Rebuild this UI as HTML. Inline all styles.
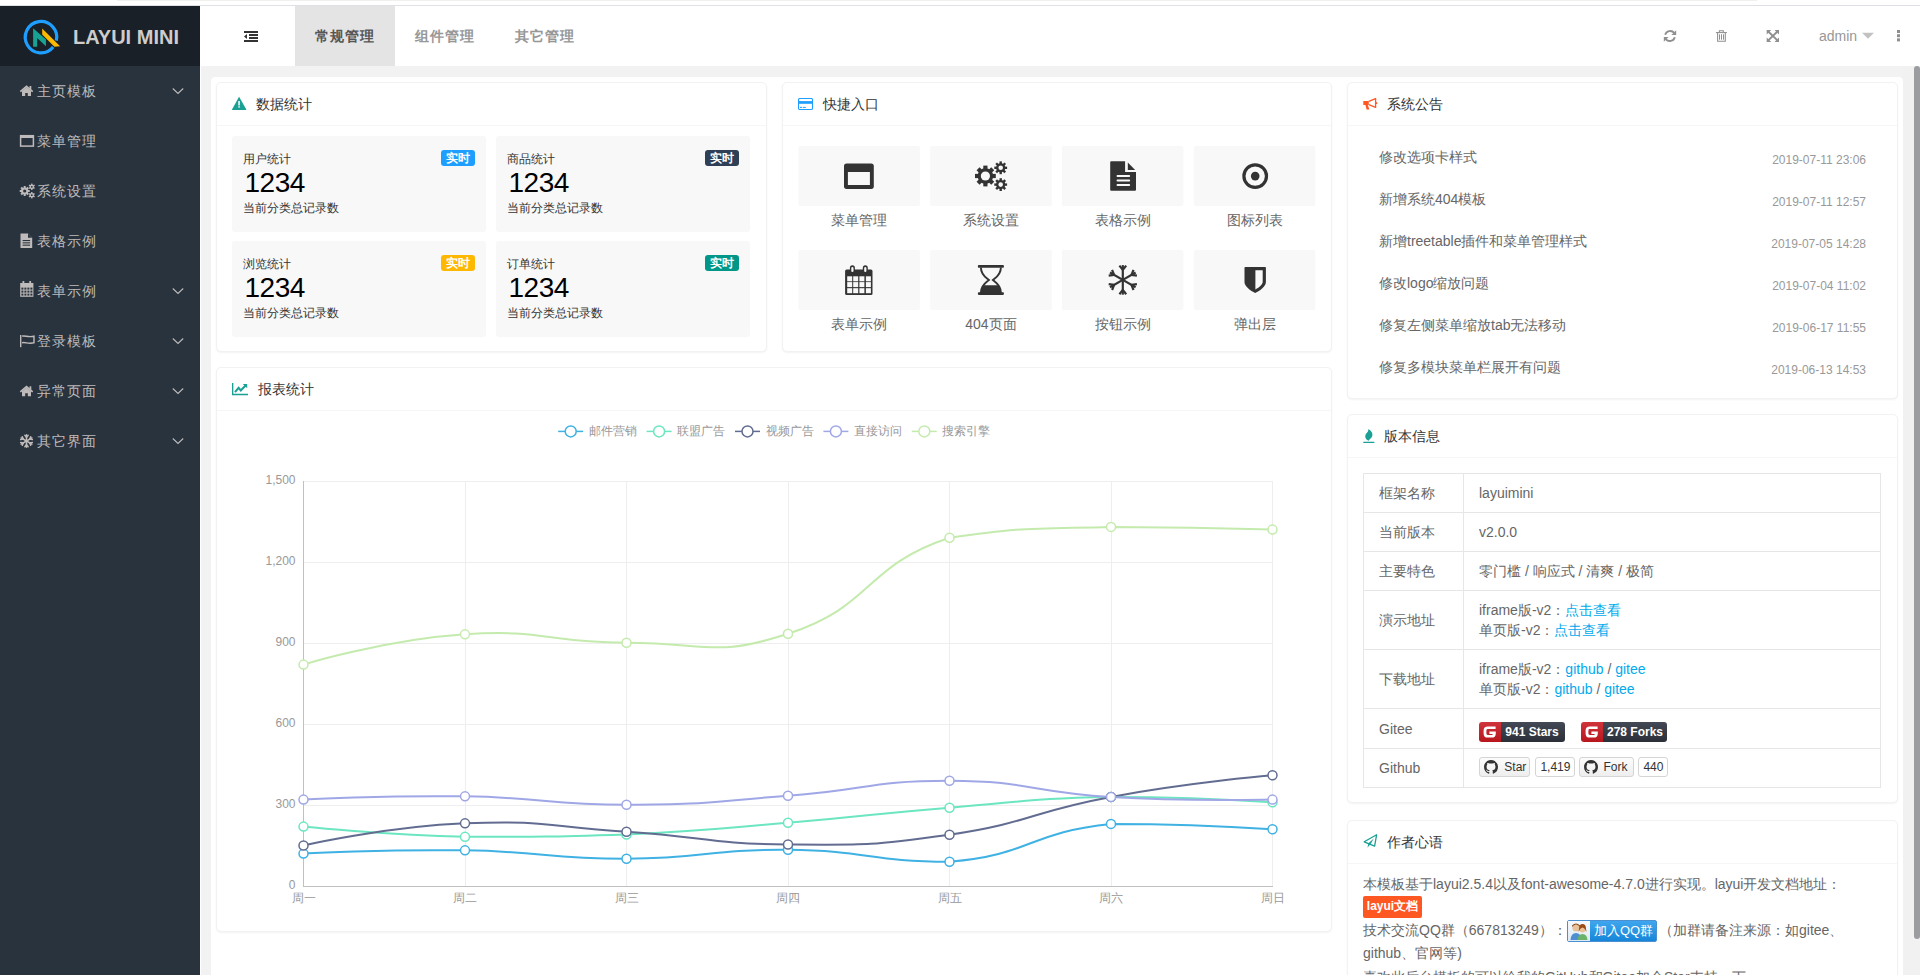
<!DOCTYPE html>
<html><head><meta charset="utf-8">
<style>
*{box-sizing:border-box;margin:0;padding:0}
html,body{width:1920px;height:975px;overflow:hidden;background:#fff;font-family:"Liberation Sans",sans-serif;font-size:14px;color:#666}
.abs{position:absolute}
#topline{position:absolute;left:0;top:5px;width:1920px;height:1px;background:#dfe0e6}
#logo{position:absolute;left:0;top:6px;width:200px;height:60px;background:#192027}
#logo .t{position:absolute;left:73px;top:19px;font-size:20px;font-weight:bold;color:#cfcccc;line-height:24px;letter-spacing:0}
#side{position:absolute;left:0;top:66px;width:200px;height:909px;background:#28333e}
#side .it{position:absolute;left:0;width:200px;height:50px;line-height:50px;color:#bfbbbb;font-size:14px}
#side .it svg{position:absolute;fill:#bfbbbb}
#side .it span{position:absolute;left:37px;top:0;letter-spacing:1px}
#side .it .chev{position:absolute;left:172px;top:22px}
#header{position:absolute;left:200px;top:6px;width:1720px;height:60px;background:#fff}
.tab{position:absolute;top:0;height:60px;line-height:60px;font-size:14px;font-weight:bold;color:#979797;letter-spacing:1px}
#frame{position:absolute;left:200px;top:66px;width:1720px;height:909px;background:#f2f2f2;border-left:1px solid #fff}
#main{position:absolute;left:210px;top:76px;width:1694px;height:1200px;background:#fff;border:1px solid #f2f2f2;border-radius:5px}
.card{position:absolute;background:#fff;border:1px solid #f2f2f2;border-radius:5px;box-shadow:0 1px 2px 0 rgba(0,0,0,.05)}
.ch{position:absolute;left:0;top:0;right:0;height:43px;border-bottom:1px solid #f6f6f6;color:#333;font-size:14px;line-height:42px;padding-left:39px}
.ch svg{position:absolute;left:15px}
#sb{position:absolute;left:1903px;top:66px;width:17px;height:909px;background:#f1f1f1}
#thumb{position:absolute;left:1914px;top:66px;width:6px;height:873px;background:#9c9da1;border-radius:3px}

.panel{position:absolute;width:254px;height:96px;background:#f8f8f8;border-radius:3px}
.panel .h5{position:absolute;left:11px;top:14.5px;font-size:12px;line-height:16px;color:#333}
.panel .lab{position:absolute;right:11px;top:14px;width:34px;height:16px;border-radius:3px;color:#fff;font-size:12px;font-weight:bold;line-height:16px;text-align:center}
.panel .num{position:absolute;left:12.5px;top:30.5px;font-size:28px;letter-spacing:-0.5px;line-height:32px;color:#000}
.panel .sm{position:absolute;left:11px;top:63.5px;font-size:12px;line-height:16px;color:#333}

.tb{position:absolute;border-collapse:collapse;font-size:14px;color:#666}
.tb td{border:1px solid #e6e6e6;padding:0 15px;line-height:20px;vertical-align:middle;white-space:nowrap}
a.lk{color:#01aaed;text-decoration:none}
.gb{position:absolute;height:19.5px;border-radius:3px;overflow:hidden;font-size:12px;font-weight:bold;color:#fff;line-height:21.5px}
.gb .r{position:absolute;left:0;top:0;width:22px;height:100%;background:linear-gradient(#d0343b,#b8161d)}
.gb .d{position:absolute;left:22px;top:0;right:0;height:100%;background:linear-gradient(#434955,#2b2f38);padding-left:4px}
.gh{position:absolute;height:19.5px;border:1px solid #d5d5d5;border-radius:3px;font-size:12px;font-weight:normal;color:#333;line-height:19.5px;background:linear-gradient(#fcfcfc,#eeeeee)}
.gc{position:absolute;height:19.5px;border:1px solid #d5d5d5;border-radius:3px;font-size:12px;color:#333;line-height:19.5px;background:#fff;text-align:center}
</style></head><body>
<div id="topline"></div><div class="abs" style="left:117px;top:0;width:1640px;height:1px;background:#eff1ef"></div>
<div id="logo">
  <svg class="abs" style="left:0;top:0" width="200" height="60" viewBox="0 0 200 60">
    <path d="M53.2 41.08 A15.7 15.7 0 1 1 56.3 34.73" fill="none" stroke="#1e9fff" stroke-width="3.2"/>
    <polygon fill="#16a394" points="33.13,22.13 45.93,33.6 45.93,40.27 37.13,32 37.13,40.8 33.13,40.8"/>
    <polygon fill="#fdb800" points="42.2,22.4 60.07,40.27 54.47,40.8 42.2,28.53"/>
  </svg>
  <div class="t">LAYUI MINI</div>
</div>
<div id="side">
  <svg class="abs" style="left:0;top:0" width="200" height="460" viewBox="0 66 200 460"><g transform="translate(0,0.00)"><polyline points="20.3,91.6 26.5,86.3 32.7,91.6" fill="none" stroke="#bfbbbb" stroke-width="1.6" stroke-linejoin="miter"/><path d="M22,91 L26.5,87.3 L31,91 L31,96 L27.8,96 L27.8,93 L25.2,93 L25.2,96 L22,96 Z" fill="#bfbbbb"/><rect x="29.5" y="86" width="1.8" height="3.5" fill="#bfbbbb"/></g><rect x="20.6" y="135.7" width="12.8" height="10.4" fill="none" stroke="#bfbbbb" stroke-width="1.5"/><rect x="20" y="135" width="14" height="3" fill="#bfbbbb"/><g fill="#bfbbbb"><rect x="23.70" y="186.00" width="2.00" height="2.80" transform="rotate(0.0 24.7 191)"/><rect x="23.70" y="186.00" width="2.00" height="2.80" transform="rotate(45.0 24.7 191)"/><rect x="23.70" y="186.00" width="2.00" height="2.80" transform="rotate(90.0 24.7 191)"/><rect x="23.70" y="186.00" width="2.00" height="2.80" transform="rotate(135.0 24.7 191)"/><rect x="23.70" y="186.00" width="2.00" height="2.80" transform="rotate(180.0 24.7 191)"/><rect x="23.70" y="186.00" width="2.00" height="2.80" transform="rotate(225.0 24.7 191)"/><rect x="23.70" y="186.00" width="2.00" height="2.80" transform="rotate(270.0 24.7 191)"/><rect x="23.70" y="186.00" width="2.00" height="2.80" transform="rotate(315.0 24.7 191)"/><circle cx="24.7" cy="191" r="3.6"/><rect x="31.10" y="183.60" width="1.40" height="2.00" transform="rotate(0.0 31.8 186.8)"/><rect x="31.10" y="183.60" width="1.40" height="2.00" transform="rotate(60.0 31.8 186.8)"/><rect x="31.10" y="183.60" width="1.40" height="2.00" transform="rotate(120.0 31.8 186.8)"/><rect x="31.10" y="183.60" width="1.40" height="2.00" transform="rotate(180.0 31.8 186.8)"/><rect x="31.10" y="183.60" width="1.40" height="2.00" transform="rotate(240.0 31.8 186.8)"/><rect x="31.10" y="183.60" width="1.40" height="2.00" transform="rotate(300.0 31.8 186.8)"/><circle cx="31.8" cy="186.8" r="2.2"/><rect x="31.10" y="192.00" width="1.40" height="2.00" transform="rotate(0.0 31.8 195.2)"/><rect x="31.10" y="192.00" width="1.40" height="2.00" transform="rotate(60.0 31.8 195.2)"/><rect x="31.10" y="192.00" width="1.40" height="2.00" transform="rotate(120.0 31.8 195.2)"/><rect x="31.10" y="192.00" width="1.40" height="2.00" transform="rotate(180.0 31.8 195.2)"/><rect x="31.10" y="192.00" width="1.40" height="2.00" transform="rotate(240.0 31.8 195.2)"/><rect x="31.10" y="192.00" width="1.40" height="2.00" transform="rotate(300.0 31.8 195.2)"/><circle cx="31.8" cy="195.2" r="2.2"/></g><circle cx="24.7" cy="191" r="1.6" fill="#28333e"/><circle cx="31.8" cy="186.8" r="0.9" fill="#28333e"/><circle cx="31.8" cy="195.2" r="0.9" fill="#28333e"/><path d="M20.5,233.5 L28,233.5 L32.2,237.7 L32.2,248 L20.5,248 Z" fill="#bfbbbb"/><path d="M28,233.5 L28,237.7 L32.2,237.7" fill="#28333e"/><rect x="22.6" y="240" width="7.5" height="1.1" fill="#28333e"/><rect x="22.6" y="242.3" width="7.5" height="1.1" fill="#28333e"/><rect x="22.6" y="244.6" width="7.5" height="1.1" fill="#28333e"/><rect x="20.2" y="283" width="13.2" height="13.8" fill="#bfbbbb"/><rect x="22.5" y="281" width="1.8" height="3.5" fill="#bfbbbb"/><rect x="29.3" y="281" width="1.8" height="3.5" fill="#bfbbbb"/><rect x="21.4" y="287.6" width="2.0" height="2.0" fill="#28333e"/><rect x="21.4" y="290.6" width="2.0" height="2.0" fill="#28333e"/><rect x="21.4" y="293.6" width="2.0" height="2.0" fill="#28333e"/><rect x="24.4" y="287.6" width="2.0" height="2.0" fill="#28333e"/><rect x="24.4" y="290.6" width="2.0" height="2.0" fill="#28333e"/><rect x="24.4" y="293.6" width="2.0" height="2.0" fill="#28333e"/><rect x="27.4" y="287.6" width="2.0" height="2.0" fill="#28333e"/><rect x="27.4" y="290.6" width="2.0" height="2.0" fill="#28333e"/><rect x="27.4" y="293.6" width="2.0" height="2.0" fill="#28333e"/><rect x="30.4" y="287.6" width="2.0" height="2.0" fill="#28333e"/><rect x="30.4" y="290.6" width="2.0" height="2.0" fill="#28333e"/><rect x="30.4" y="293.6" width="2.0" height="2.0" fill="#28333e"/><rect x="20" y="335" width="1.4" height="12.2" fill="#bfbbbb"/><path d="M22,336.2 C25,335 28,337.8 34,336.2 L34,342.8 C28,344.4 25,341.6 22,342.8" fill="none" stroke="#bfbbbb" stroke-width="1.4"/><g transform="translate(0,300.30)"><polyline points="20.3,91.6 26.5,86.3 32.7,91.6" fill="none" stroke="#bfbbbb" stroke-width="1.6" stroke-linejoin="miter"/><path d="M22,91 L26.5,87.3 L31,91 L31,96 L27.8,96 L27.8,93 L25.2,93 L25.2,96 L22,96 Z" fill="#bfbbbb"/><rect x="29.5" y="86" width="1.8" height="3.5" fill="#bfbbbb"/></g><g stroke="#bfbbbb" stroke-width="1.5" fill="none" stroke-linecap="round"><line x1="26.5" y1="441" x2="26.50" y2="434.80"/><line x1="26.50" y1="437.20" x2="28.17" y2="435.21"/><line x1="26.50" y1="437.20" x2="24.83" y2="435.21"/><line x1="26.5" y1="441" x2="21.13" y2="437.90"/><line x1="23.21" y1="439.10" x2="22.32" y2="436.66"/><line x1="23.21" y1="439.10" x2="20.65" y2="439.55"/><line x1="26.5" y1="441" x2="21.13" y2="444.10"/><line x1="23.21" y1="442.90" x2="20.65" y2="442.45"/><line x1="23.21" y1="442.90" x2="22.32" y2="445.34"/><line x1="26.5" y1="441" x2="26.50" y2="447.20"/><line x1="26.50" y1="444.80" x2="24.83" y2="446.79"/><line x1="26.50" y1="444.80" x2="28.17" y2="446.79"/><line x1="26.5" y1="441" x2="31.87" y2="444.10"/><line x1="29.79" y1="442.90" x2="30.68" y2="445.34"/><line x1="29.79" y1="442.90" x2="32.35" y2="442.45"/><line x1="26.5" y1="441" x2="31.87" y2="437.90"/><line x1="29.79" y1="439.10" x2="32.35" y2="439.55"/><line x1="29.79" y1="439.10" x2="30.68" y2="436.66"/></g><polyline points="172.8,88.5 178,93.5 183.2,88.5" fill="none" stroke="#bfbbbb" stroke-width="1.1"/><polyline points="172.8,288.5 178,293.5 183.2,288.5" fill="none" stroke="#bfbbbb" stroke-width="1.1"/><polyline points="172.8,338.5 178,343.5 183.2,338.5" fill="none" stroke="#bfbbbb" stroke-width="1.1"/><polyline points="172.8,388.5 178,393.5 183.2,388.5" fill="none" stroke="#bfbbbb" stroke-width="1.1"/><polyline points="172.8,438.5 178,443.5 183.2,438.5" fill="none" stroke="#bfbbbb" stroke-width="1.1"/></svg>
  <div class="it" style="top:0"><span>主页模板</span></div>
  <div class="it" style="top:50px"><span>菜单管理</span></div>
  <div class="it" style="top:100px"><span>系统设置</span></div>
  <div class="it" style="top:150px"><span>表格示例</span></div>
  <div class="it" style="top:200px"><span>表单示例</span></div>
  <div class="it" style="top:250px"><span>登录模板</span></div>
  <div class="it" style="top:300px"><span>异常页面</span></div>
  <div class="it" style="top:350px"><span>其它界面</span></div>
</div>
<div id="header">
  <svg class="abs" style="left:0;top:0" width="1720" height="60" viewBox="200 6 1720 60">
  <g fill="#333">
    <rect x="244" y="31" width="14" height="2"/><rect x="249" y="34" width="9" height="2"/><rect x="249" y="37" width="9" height="2"/><rect x="244" y="40" width="14" height="2"/>
    <polygon points="247,34 244,36.5 247,39"/>
  </g>
  <g fill="#8f8f8f">
    <path d="M1665.2,34.8 A5.2,5.2 0 0 1 1674.2,32.8" fill="none" stroke="#8f8f8f" stroke-width="1.9"/>
    <polygon points="1676.2,30.2 1676.2,35 1671.4,35"/>
    <path d="M1674.8,37.2 A5.2,5.2 0 0 1 1665.8,39.2" fill="none" stroke="#8f8f8f" stroke-width="1.9"/>
    <polygon points="1663.8,41.8 1663.8,37 1668.6,37"/>
  </g>
  <g fill="none" stroke="#8f8f8f" stroke-width="1.05">
    <line x1="1715.9" y1="32.6" x2="1726.9" y2="32.6"/>
    <path d="M1719.4,32.4 L1719.4,30.7 L1723.3,30.7 L1723.3,32.4"/>
    <path d="M1717.6,32.6 L1717.6,41.3 L1725.3,41.3 L1725.3,32.6"/>
    <line x1="1719.5" y1="34.3" x2="1719.5" y2="39.7"/><line x1="1721.5" y1="34.3" x2="1721.5" y2="39.7"/><line x1="1723.5" y1="34.3" x2="1723.5" y2="39.7"/>
  </g>
  <g fill="#8f8f8f">
    <polygon points="1766.7,29.9 1771.2,29.9 1766.7,34.4"/>
    <polygon points="1779,29.9 1774.5,29.9 1779,34.4"/>
    <polygon points="1766.7,41.9 1771.2,41.9 1766.7,37.4"/>
    <polygon points="1779,41.9 1774.5,41.9 1779,37.4"/>
    <path d="M1768.5,31.7 L1777.2,40.1 M1777.2,31.7 L1768.5,40.1" stroke="#8f8f8f" stroke-width="1.9"/>
    <polygon points="1862,32.8 1874,32.8 1868,38.8" fill="#c2c2c2"/>
    <rect x="1897" y="30" width="3" height="3"/><rect x="1897" y="34.2" width="3" height="3"/><rect x="1897" y="38.4" width="3" height="3"/>
  </g>
</svg>
  <div class="abs" style="left:95px;top:0;width:100px;height:60px;background:#e4e4e4"></div>
  <div class="tab" style="left:115px;color:#565656">常规管理</div>
  <div class="tab" style="left:215px">组件管理</div>
  <div class="tab" style="left:315px">其它管理</div>
  <div class="abs" style="left:1619px;top:0;line-height:60px;font-size:14px;color:#979797">admin</div>
</div>
<div id="frame"></div>
<div id="main"></div>
<div id="sb"></div>
<div id="thumb"></div>

<!-- cards -->
<div class="card" id="c1" style="left:216px;top:82px;width:551px;height:270px">
  <div class="ch"><svg width="16" height="16" viewBox="0 0 16 16" style="top:13px;left:15px"><path d="M7.1,0.8 L14.2,13.3 Q14.5,14 13.8,14 L0.5,14 Q-0.2,14 0.1,13.3 Z" fill="#1aa094"/><rect x="6.3" y="5" width="1.5" height="4.5" fill="#fff"/><rect x="6.3" y="10.2" width="1.5" height="1.4" fill="#fff"/></svg>数据统计</div><div class="panel" style="left:15px;top:53px"><div class="h5">用户统计</div><div class="lab" style="background:#1e9fff">实时</div><div class="num">1234</div><div class="sm">当前分类总记录数</div></div><div class="panel" style="left:279px;top:53px"><div class="h5">商品统计</div><div class="lab" style="background:#2f4056">实时</div><div class="num">1234</div><div class="sm">当前分类总记录数</div></div><div class="panel" style="left:15px;top:158px"><div class="h5">浏览统计</div><div class="lab" style="background:#ffb800">实时</div><div class="num">1234</div><div class="sm">当前分类总记录数</div></div><div class="panel" style="left:279px;top:158px"><div class="h5">订单统计</div><div class="lab" style="background:#009688">实时</div><div class="num">1234</div><div class="sm">当前分类总记录数</div></div>
</div>
<div class="card" id="c2" style="left:782px;top:82px;width:550px;height:270px">
  <div class="ch" style="padding-left:40px"><svg width="16" height="16" viewBox="0 0 16 16" style="top:15px;left:15px"><rect x="0.5" y="0.5" width="14" height="11" rx="1.3" fill="none" stroke="#1e9fff" stroke-width="1.1"/><rect x="0.5" y="3.1" width="14" height="2.7" fill="#1e9fff"/><rect x="2" y="8.9" width="2" height="1" fill="#1e9fff"/><rect x="4.8" y="8.9" width="3" height="1" fill="#1e9fff"/></svg>快捷入口</div><svg class="abs" style="left:-1px;top:-1px" width="550" height="270" viewBox="782 82 550 270"><rect x="798.5" y="146" width="121.5" height="60" rx="2" fill="#f8f8f8"/><rect x="798.5" y="250" width="121.5" height="60" rx="2" fill="#f8f8f8"/><rect x="930.2" y="146" width="121.5" height="60" rx="2" fill="#f8f8f8"/><rect x="930.2" y="250" width="121.5" height="60" rx="2" fill="#f8f8f8"/><rect x="1061.9" y="146" width="121.5" height="60" rx="2" fill="#f8f8f8"/><rect x="1061.9" y="250" width="121.5" height="60" rx="2" fill="#f8f8f8"/><rect x="1193.8" y="146" width="121.5" height="60" rx="2" fill="#f8f8f8"/><rect x="1193.8" y="250" width="121.5" height="60" rx="2" fill="#f8f8f8"/><rect x="844" y="163.5" width="29.8" height="25.4" rx="2.6" fill="#333"/><rect x="847.9" y="172" width="22" height="13" fill="#f8f8f8"/><circle cx="985.4" cy="176" r="7.8" fill="#333"/><rect x="983.30" y="165.60" width="4.20" height="3.60" fill="#333" transform="rotate(0.0 985.4 176)"/><rect x="983.30" y="165.60" width="4.20" height="3.60" fill="#333" transform="rotate(45.0 985.4 176)"/><rect x="983.30" y="165.60" width="4.20" height="3.60" fill="#333" transform="rotate(90.0 985.4 176)"/><rect x="983.30" y="165.60" width="4.20" height="3.60" fill="#333" transform="rotate(135.0 985.4 176)"/><rect x="983.30" y="165.60" width="4.20" height="3.60" fill="#333" transform="rotate(180.0 985.4 176)"/><rect x="983.30" y="165.60" width="4.20" height="3.60" fill="#333" transform="rotate(225.0 985.4 176)"/><rect x="983.30" y="165.60" width="4.20" height="3.60" fill="#333" transform="rotate(270.0 985.4 176)"/><rect x="983.30" y="165.60" width="4.20" height="3.60" fill="#333" transform="rotate(315.0 985.4 176)"/><circle cx="985.4" cy="176" r="4.6" fill="#f8f8f8"/><circle cx="1000.7" cy="167.8" r="4.6" fill="#333"/><rect x="999.50" y="161.40" width="2.40" height="2.80" fill="#333" transform="rotate(0.0 1000.7 167.8)"/><rect x="999.50" y="161.40" width="2.40" height="2.80" fill="#333" transform="rotate(45.0 1000.7 167.8)"/><rect x="999.50" y="161.40" width="2.40" height="2.80" fill="#333" transform="rotate(90.0 1000.7 167.8)"/><rect x="999.50" y="161.40" width="2.40" height="2.80" fill="#333" transform="rotate(135.0 1000.7 167.8)"/><rect x="999.50" y="161.40" width="2.40" height="2.80" fill="#333" transform="rotate(180.0 1000.7 167.8)"/><rect x="999.50" y="161.40" width="2.40" height="2.80" fill="#333" transform="rotate(225.0 1000.7 167.8)"/><rect x="999.50" y="161.40" width="2.40" height="2.80" fill="#333" transform="rotate(270.0 1000.7 167.8)"/><rect x="999.50" y="161.40" width="2.40" height="2.80" fill="#333" transform="rotate(315.0 1000.7 167.8)"/><circle cx="1000.7" cy="167.8" r="2.3" fill="#f8f8f8"/><circle cx="1000.7" cy="184.6" r="4.6" fill="#333"/><rect x="999.50" y="178.20" width="2.40" height="2.80" fill="#333" transform="rotate(0.0 1000.7 184.6)"/><rect x="999.50" y="178.20" width="2.40" height="2.80" fill="#333" transform="rotate(45.0 1000.7 184.6)"/><rect x="999.50" y="178.20" width="2.40" height="2.80" fill="#333" transform="rotate(90.0 1000.7 184.6)"/><rect x="999.50" y="178.20" width="2.40" height="2.80" fill="#333" transform="rotate(135.0 1000.7 184.6)"/><rect x="999.50" y="178.20" width="2.40" height="2.80" fill="#333" transform="rotate(180.0 1000.7 184.6)"/><rect x="999.50" y="178.20" width="2.40" height="2.80" fill="#333" transform="rotate(225.0 1000.7 184.6)"/><rect x="999.50" y="178.20" width="2.40" height="2.80" fill="#333" transform="rotate(270.0 1000.7 184.6)"/><rect x="999.50" y="178.20" width="2.40" height="2.80" fill="#333" transform="rotate(315.0 1000.7 184.6)"/><circle cx="1000.7" cy="184.6" r="2.3" fill="#f8f8f8"/><path d="M1111.2,161.2 L1125.1,161.2 L1125.1,171.9 L1136,171.9 L1136,189.7 Q1136,190.7 1135,190.7 L1111.2,190.7 Q1110.2,190.7 1110.2,189.7 L1110.2,162.2 Q1110.2,161.2 1111.2,161.2 Z" fill="#333"/><polygon points="1127.8,162.6 1135.2,170 1127.8,170" fill="#333"/><rect x="1116.6" y="174.9" width="13.5" height="2.1" rx="0.8" fill="#f8f8f8"/><rect x="1116.6" y="179.4" width="13.5" height="2.1" rx="0.8" fill="#f8f8f8"/><rect x="1116.6" y="183.9" width="13.5" height="2.1" rx="0.8" fill="#f8f8f8"/><circle cx="1255.2" cy="176.1" r="11.3" fill="none" stroke="#333" stroke-width="3.2"/><circle cx="1255.2" cy="176.1" r="4.3" fill="#333"/><rect x="845.1" y="269.6" width="27.4" height="25.3" rx="1.5" fill="#333"/><rect x="847.2" y="276.3" width="5" height="5" fill="#f8f8f8"/><rect x="847.2" y="282.1" width="5" height="5" fill="#f8f8f8"/><rect x="847.2" y="288.2" width="5" height="5" fill="#f8f8f8"/><rect x="853.2" y="276.3" width="5" height="5" fill="#f8f8f8"/><rect x="853.2" y="282.1" width="5" height="5" fill="#f8f8f8"/><rect x="853.2" y="288.2" width="5" height="5" fill="#f8f8f8"/><rect x="859.4" y="276.3" width="5" height="5" fill="#f8f8f8"/><rect x="859.4" y="282.1" width="5" height="5" fill="#f8f8f8"/><rect x="859.4" y="288.2" width="5" height="5" fill="#f8f8f8"/><rect x="865.9" y="276.3" width="5" height="5" fill="#f8f8f8"/><rect x="865.9" y="282.1" width="5" height="5" fill="#f8f8f8"/><rect x="865.9" y="288.2" width="5" height="5" fill="#f8f8f8"/><rect x="849.9" y="265.3" width="5" height="8.3" rx="2.5" fill="#333"/><rect x="862.8" y="265.3" width="5" height="8.3" rx="2.5" fill="#333"/><rect x="851.3" y="267" width="2.2" height="5" rx="1.1" fill="#f8f8f8"/><rect x="864.2" y="267" width="2.2" height="5" rx="1.1" fill="#f8f8f8"/><rect x="977.9" y="265.1" width="26" height="2.6" rx="0.8" fill="#333"/><rect x="977.9" y="292.3" width="26" height="2.6" rx="0.8" fill="#333"/><path d="M980.9,267.5 C980.9,275 986,277.5 988.9,280 C986,282.5 980.9,285 980.9,292.5 L1000.9,292.5 C1000.9,285 995.8,282.5 992.9,280 C995.8,277.5 1000.9,275 1000.9,267.5" fill="none" stroke="#333" stroke-width="1.9"/><path d="M983.5,285.2 L998.3,285.2 C1000,287 1000.9,289.5 1000.9,292.5 L980.9,292.5 C980.9,289.5 981.8,287 983.5,285.2 Z" fill="#333"/><g stroke="#333" stroke-width="2.2" fill="none" stroke-linecap="butt"><line x1="1122.8" y1="279.9" x2="1122.80" y2="265.10"/><line x1="1122.80" y1="269.90" x2="1126.19" y2="265.57"/><line x1="1122.80" y1="269.90" x2="1119.41" y2="265.57"/><line x1="1122.8" y1="279.9" x2="1109.98" y2="272.50"/><line x1="1114.14" y1="274.90" x2="1112.08" y2="269.80"/><line x1="1114.14" y1="274.90" x2="1108.69" y2="275.67"/><line x1="1122.8" y1="279.9" x2="1109.98" y2="287.30"/><line x1="1114.14" y1="284.90" x2="1108.69" y2="284.13"/><line x1="1114.14" y1="284.90" x2="1112.08" y2="290.00"/><line x1="1122.8" y1="279.9" x2="1122.80" y2="294.70"/><line x1="1122.80" y1="289.90" x2="1119.41" y2="294.23"/><line x1="1122.80" y1="289.90" x2="1126.19" y2="294.23"/><line x1="1122.8" y1="279.9" x2="1135.62" y2="287.30"/><line x1="1131.46" y1="284.90" x2="1133.52" y2="290.00"/><line x1="1131.46" y1="284.90" x2="1136.91" y2="284.13"/><line x1="1122.8" y1="279.9" x2="1135.62" y2="272.50"/><line x1="1131.46" y1="274.90" x2="1136.91" y2="275.67"/><line x1="1131.46" y1="274.90" x2="1133.52" y2="269.80"/></g><path d="M1245.2,267.1 L1265.2,267.1 Q1265.9,267.1 1265.9,267.8 L1265.9,282 C1265.9,286.5 1260,290.5 1255.2,293.1 C1250.4,290.5 1244.5,286.5 1244.5,282 L1244.5,267.8 Q1244.5,267.1 1245.2,267.1 Z" fill="#333"/><path d="M1255.4,270.3 L1262.7,270.3 L1262.7,281.8 C1262.7,284.5 1259.5,287.3 1255.4,289.5 Z" fill="#f8f8f8"/></svg><div class="abs" style="left:15.5px;top:127px;width:121.5px;text-align:center;font-size:14px;line-height:20px;color:#666">菜单管理</div><div class="abs" style="left:147.2px;top:127px;width:121.5px;text-align:center;font-size:14px;line-height:20px;color:#666">系统设置</div><div class="abs" style="left:278.9px;top:127px;width:121.5px;text-align:center;font-size:14px;line-height:20px;color:#666">表格示例</div><div class="abs" style="left:410.8px;top:127px;width:121.5px;text-align:center;font-size:14px;line-height:20px;color:#666">图标列表</div><div class="abs" style="left:15.5px;top:231px;width:121.5px;text-align:center;font-size:14px;line-height:20px;color:#666">表单示例</div><div class="abs" style="left:147.2px;top:231px;width:121.5px;text-align:center;font-size:14px;line-height:20px;color:#666">404页面</div><div class="abs" style="left:278.9px;top:231px;width:121.5px;text-align:center;font-size:14px;line-height:20px;color:#666">按钮示例</div><div class="abs" style="left:410.8px;top:231px;width:121.5px;text-align:center;font-size:14px;line-height:20px;color:#666">弹出层</div>
</div>
<div class="card" id="c3" style="left:1347px;top:82px;width:551px;height:317px">
  <div class="ch"><svg width="16" height="16" viewBox="1362 95 16 16" style="top:12px;left:14px"><rect x="1363.3" y="101" width="5.5" height="4" rx="0.6" fill="#ff5722"/><path d="M1365.3,104.5 L1367.6,104.5 L1369.4,109.6 L1366.6,109.6 Z" fill="#ff5722"/><path d="M1368.8,101.4 L1375.6,98.6 L1375.6,107.4 L1368.8,104.6" fill="none" stroke="#ff5722" stroke-width="1.3" stroke-linejoin="round"/><rect x="1376" y="102.2" width="1.2" height="1.8" fill="#ff5722"/></svg>系统公告</div><div class="abs" style="left:31px;top:60px;line-height:28px;font-size:14px;color:#666;white-space:nowrap">修改选项卡样式</div><div class="abs" style="right:31px;top:69px;line-height:16px;font-size:12px;color:#999;white-space:nowrap">2019-07-11 23:06</div><div class="abs" style="left:31px;top:102px;line-height:28px;font-size:14px;color:#666;white-space:nowrap">新增系统404模板</div><div class="abs" style="right:31px;top:111px;line-height:16px;font-size:12px;color:#999;white-space:nowrap">2019-07-11 12:57</div><div class="abs" style="left:31px;top:144px;line-height:28px;font-size:14px;color:#666;white-space:nowrap">新增treetable插件和菜单管理样式</div><div class="abs" style="right:31px;top:153px;line-height:16px;font-size:12px;color:#999;white-space:nowrap">2019-07-05 14:28</div><div class="abs" style="left:31px;top:186px;line-height:28px;font-size:14px;color:#666;white-space:nowrap">修改logo缩放问题</div><div class="abs" style="right:31px;top:195px;line-height:16px;font-size:12px;color:#999;white-space:nowrap">2019-07-04 11:02</div><div class="abs" style="left:31px;top:228px;line-height:28px;font-size:14px;color:#666;white-space:nowrap">修复左侧菜单缩放tab无法移动</div><div class="abs" style="right:31px;top:237px;line-height:16px;font-size:12px;color:#999;white-space:nowrap">2019-06-17 11:55</div><div class="abs" style="left:31px;top:270px;line-height:28px;font-size:14px;color:#666;white-space:nowrap">修复多模块菜单栏展开有问题</div><div class="abs" style="right:31px;top:279px;line-height:16px;font-size:12px;color:#999;white-space:nowrap">2019-06-13 14:53</div>
</div>
<div class="card" id="c4" style="left:216px;top:367px;width:1116px;height:565px">
  <div class="ch" style="padding-left:41px"><svg width="18" height="16" viewBox="232 381 18 16" style="top:13px;left:15px"><path d="M232.6,383 L232.6,394.5 L248,394.5" fill="none" stroke="#1aa094" stroke-width="1.5"/><polyline points="235,392.2 238.6,387.8 240.8,390.4 245.8,385.2" fill="none" stroke="#1aa094" stroke-width="2"/><polygon points="242.8,383.9 247.2,383.9 247.2,388.3" fill="#1aa094"/></svg>报表统计</div><svg class="abs" style="left:-1px;top:-1px" width="1116" height="565" viewBox="216 367 1116 565">
<g stroke="#eeeeee" stroke-width="1" shape-rendering="crispEdges"><line x1="303.5" y1="805.5" x2="1272.5" y2="805.5"/><line x1="303.5" y1="724.5" x2="1272.5" y2="724.5"/><line x1="303.5" y1="643.5" x2="1272.5" y2="643.5"/><line x1="303.5" y1="562.5" x2="1272.5" y2="562.5"/><line x1="303.5" y1="481.5" x2="1272.5" y2="481.5"/><line x1="465.5" y1="481" x2="465.5" y2="886.0"/><line x1="626.5" y1="481" x2="626.5" y2="886.0"/><line x1="788.5" y1="481" x2="788.5" y2="886.0"/><line x1="949.5" y1="481" x2="949.5" y2="886.0"/><line x1="1111.5" y1="481" x2="1111.5" y2="886.0"/><line x1="1272.5" y1="481" x2="1272.5" y2="886.0"/></g>
<g stroke="#c0c0c0" stroke-width="1" shape-rendering="crispEdges"><line x1="303.5" y1="481" x2="303.5" y2="886.5"/><line x1="303" y1="886.5" x2="1273.0" y2="886.5"/></g>
<path d="M303.50,853.60 C303.50,853.60 384.30,849.08 465.00,850.36 C545.80,851.64 545.76,858.86 626.50,858.73 C707.26,858.59 707.30,849.08 788.00,849.82 C868.80,850.56 869.72,861.70 949.50,861.70 C1031.22,855.14 1029.20,832.11 1111.00,823.90 C1190.70,823.90 1272.50,829.30 1272.50,829.30" fill="none" stroke="#3fb1e3" stroke-width="2" stroke-linejoin="round"/>
<path d="M303.50,826.60 C303.50,826.60 384.17,834.90 465.00,836.86 C545.67,836.86 545.85,836.86 626.50,834.43 C707.35,830.92 707.32,829.50 788.00,822.82 C868.82,816.13 868.66,814.19 949.50,807.70 C1030.16,801.23 1030.18,798.25 1111.00,796.90 C1191.68,796.90 1272.50,802.30 1272.50,802.30" fill="none" stroke="#6be6c1" stroke-width="2" stroke-linejoin="round"/>
<path d="M303.50,845.50 C303.50,845.50 383.93,826.82 465.00,823.36 C545.43,819.93 545.82,826.47 626.50,831.73 C707.32,837.00 707.20,843.68 788.00,844.42 C868.70,845.16 869.75,845.50 949.50,834.70 C1031.25,822.67 1029.53,811.88 1111.00,796.90 C1191.03,782.18 1272.50,775.30 1272.50,775.30" fill="none" stroke="#626c91" stroke-width="2" stroke-linejoin="round"/>
<path d="M303.50,799.60 C303.50,799.60 384.30,795.08 465.00,796.36 C545.80,797.64 545.76,804.73 626.50,804.73 C707.26,804.59 707.36,801.82 788.00,795.82 C868.86,789.80 868.78,780.70 949.50,780.70 C1030.28,780.97 1030.05,792.16 1111.00,796.90 C1191.55,801.61 1272.50,799.60 1272.50,799.60" fill="none" stroke="#a0a7e6" stroke-width="2" stroke-linejoin="round"/>
<path d="M303.50,664.60 C303.50,664.60 383.61,639.87 465.00,634.36 C545.11,628.94 545.76,642.86 626.50,642.73 C707.26,642.59 713.30,658.11 788.00,633.82 C874.80,605.60 862.73,566.42 949.50,537.70 C1024.23,526.90 1030.17,528.93 1111.00,526.90 C1191.67,526.90 1272.50,529.60 1272.50,529.60" fill="none" stroke="#c4ebad" stroke-width="2" stroke-linejoin="round"/>
<circle cx="303.50" cy="853.60" r="4.5" fill="#fff" stroke="#3fb1e3" stroke-width="1.5"/>
<circle cx="465.00" cy="850.36" r="4.5" fill="#fff" stroke="#3fb1e3" stroke-width="1.5"/>
<circle cx="626.50" cy="858.73" r="4.5" fill="#fff" stroke="#3fb1e3" stroke-width="1.5"/>
<circle cx="788.00" cy="849.82" r="4.5" fill="#fff" stroke="#3fb1e3" stroke-width="1.5"/>
<circle cx="949.50" cy="861.70" r="4.5" fill="#fff" stroke="#3fb1e3" stroke-width="1.5"/>
<circle cx="1111.00" cy="823.90" r="4.5" fill="#fff" stroke="#3fb1e3" stroke-width="1.5"/>
<circle cx="1272.50" cy="829.30" r="4.5" fill="#fff" stroke="#3fb1e3" stroke-width="1.5"/>
<circle cx="303.50" cy="826.60" r="4.5" fill="#fff" stroke="#6be6c1" stroke-width="1.5"/>
<circle cx="465.00" cy="836.86" r="4.5" fill="#fff" stroke="#6be6c1" stroke-width="1.5"/>
<circle cx="626.50" cy="834.43" r="4.5" fill="#fff" stroke="#6be6c1" stroke-width="1.5"/>
<circle cx="788.00" cy="822.82" r="4.5" fill="#fff" stroke="#6be6c1" stroke-width="1.5"/>
<circle cx="949.50" cy="807.70" r="4.5" fill="#fff" stroke="#6be6c1" stroke-width="1.5"/>
<circle cx="1111.00" cy="796.90" r="4.5" fill="#fff" stroke="#6be6c1" stroke-width="1.5"/>
<circle cx="1272.50" cy="802.30" r="4.5" fill="#fff" stroke="#6be6c1" stroke-width="1.5"/>
<circle cx="303.50" cy="845.50" r="4.5" fill="#fff" stroke="#626c91" stroke-width="1.5"/>
<circle cx="465.00" cy="823.36" r="4.5" fill="#fff" stroke="#626c91" stroke-width="1.5"/>
<circle cx="626.50" cy="831.73" r="4.5" fill="#fff" stroke="#626c91" stroke-width="1.5"/>
<circle cx="788.00" cy="844.42" r="4.5" fill="#fff" stroke="#626c91" stroke-width="1.5"/>
<circle cx="949.50" cy="834.70" r="4.5" fill="#fff" stroke="#626c91" stroke-width="1.5"/>
<circle cx="1111.00" cy="796.90" r="4.5" fill="#fff" stroke="#626c91" stroke-width="1.5"/>
<circle cx="1272.50" cy="775.30" r="4.5" fill="#fff" stroke="#626c91" stroke-width="1.5"/>
<circle cx="303.50" cy="799.60" r="4.5" fill="#fff" stroke="#a0a7e6" stroke-width="1.5"/>
<circle cx="465.00" cy="796.36" r="4.5" fill="#fff" stroke="#a0a7e6" stroke-width="1.5"/>
<circle cx="626.50" cy="804.73" r="4.5" fill="#fff" stroke="#a0a7e6" stroke-width="1.5"/>
<circle cx="788.00" cy="795.82" r="4.5" fill="#fff" stroke="#a0a7e6" stroke-width="1.5"/>
<circle cx="949.50" cy="780.70" r="4.5" fill="#fff" stroke="#a0a7e6" stroke-width="1.5"/>
<circle cx="1111.00" cy="796.90" r="4.5" fill="#fff" stroke="#a0a7e6" stroke-width="1.5"/>
<circle cx="1272.50" cy="799.60" r="4.5" fill="#fff" stroke="#a0a7e6" stroke-width="1.5"/>
<circle cx="303.50" cy="664.60" r="4.5" fill="#fff" stroke="#c4ebad" stroke-width="1.5"/>
<circle cx="465.00" cy="634.36" r="4.5" fill="#fff" stroke="#c4ebad" stroke-width="1.5"/>
<circle cx="626.50" cy="642.73" r="4.5" fill="#fff" stroke="#c4ebad" stroke-width="1.5"/>
<circle cx="788.00" cy="633.82" r="4.5" fill="#fff" stroke="#c4ebad" stroke-width="1.5"/>
<circle cx="949.50" cy="537.70" r="4.5" fill="#fff" stroke="#c4ebad" stroke-width="1.5"/>
<circle cx="1111.00" cy="526.90" r="4.5" fill="#fff" stroke="#c4ebad" stroke-width="1.5"/>
<circle cx="1272.50" cy="529.60" r="4.5" fill="#fff" stroke="#c4ebad" stroke-width="1.5"/>
<line x1="558.2" y1="431.4" x2="583.2" y2="431.4" stroke="#3fb1e3" stroke-width="1.5"/><circle cx="570.7" cy="431.4" r="5.5" fill="#fff" stroke="#3fb1e3" stroke-width="1.5"/>
<text x="588.7" y="435.2" font-size="12" fill="#999">邮件营销</text>
<line x1="646.6" y1="431.4" x2="671.6" y2="431.4" stroke="#6be6c1" stroke-width="1.5"/><circle cx="659.1" cy="431.4" r="5.5" fill="#fff" stroke="#6be6c1" stroke-width="1.5"/>
<text x="677.1" y="435.2" font-size="12" fill="#999">联盟广告</text>
<line x1="735.0" y1="431.4" x2="760.0" y2="431.4" stroke="#626c91" stroke-width="1.5"/><circle cx="747.5" cy="431.4" r="5.5" fill="#fff" stroke="#626c91" stroke-width="1.5"/>
<text x="765.5" y="435.2" font-size="12" fill="#999">视频广告</text>
<line x1="823.4" y1="431.4" x2="848.4" y2="431.4" stroke="#a0a7e6" stroke-width="1.5"/><circle cx="835.9" cy="431.4" r="5.5" fill="#fff" stroke="#a0a7e6" stroke-width="1.5"/>
<text x="853.9" y="435.2" font-size="12" fill="#999">直接访问</text>
<line x1="911.8" y1="431.4" x2="936.8" y2="431.4" stroke="#c4ebad" stroke-width="1.5"/><circle cx="924.3" cy="431.4" r="5.5" fill="#fff" stroke="#c4ebad" stroke-width="1.5"/>
<text x="942.3" y="435.2" font-size="12" fill="#999">搜索引擎</text>
<text x="295.5" y="889.2" font-size="12" fill="#999" text-anchor="end">0</text>
<text x="295.5" y="808.2" font-size="12" fill="#999" text-anchor="end">300</text>
<text x="295.5" y="727.2" font-size="12" fill="#999" text-anchor="end">600</text>
<text x="295.5" y="646.2" font-size="12" fill="#999" text-anchor="end">900</text>
<text x="295.5" y="565.2" font-size="12" fill="#999" text-anchor="end">1,200</text>
<text x="295.5" y="484.2" font-size="12" fill="#999" text-anchor="end">1,500</text>
<text x="303.5" y="902" font-size="12" fill="#999" text-anchor="middle">周一</text>
<text x="465.0" y="902" font-size="12" fill="#999" text-anchor="middle">周二</text>
<text x="626.5" y="902" font-size="12" fill="#999" text-anchor="middle">周三</text>
<text x="788.0" y="902" font-size="12" fill="#999" text-anchor="middle">周四</text>
<text x="949.5" y="902" font-size="12" fill="#999" text-anchor="middle">周五</text>
<text x="1111.0" y="902" font-size="12" fill="#999" text-anchor="middle">周六</text>
<text x="1272.5" y="902" font-size="12" fill="#999" text-anchor="middle">周日</text>
</svg>
</div>
<div class="card" id="c5" style="left:1347px;top:414px;width:551px;height:389px">
  <div class="ch" style="padding-left:36px"><svg width="16" height="18" viewBox="1363 427 16 18" style="top:12px;left:15px"><path d="M1368.2,429.2 C1371.6,430.6 1373.2,433.6 1372.1,436.6 C1371.3,438.6 1369.3,439.3 1368.6,440.8 C1365.8,439.8 1364.6,437.2 1365.5,434.8 C1366.3,432.8 1368.7,431.8 1368.2,429.2 Z" fill="#1aa094"/><rect x="1363.2" y="441.8" width="11.3" height="1.3" rx="0.6" fill="#1aa094"/></svg>版本信息</div><table class="tb" style="left:15px;top:58px;width:518px"><tr style="height:39px"><td style="width:100px">框架名称</td><td>layuimini</td></tr><tr style="height:39px"><td style="width:100px">当前版本</td><td>v2.0.0</td></tr><tr style="height:39px"><td style="width:100px">主要特色</td><td>零门槛 / 响应式 / 清爽 / 极简</td></tr><tr style="height:59px"><td style="width:100px">演示地址</td><td>iframe版-v2：<a class="lk">点击查看</a><br>单页版-v2：<a class="lk">点击查看</a></td></tr><tr style="height:59px"><td style="width:100px">下载地址</td><td>iframe版-v2：<a class="lk">github</a> / <a class="lk">gitee</a><br>单页版-v2：<a class="lk">github</a> / <a class="lk">gitee</a></td></tr><tr style="height:40px"><td style="width:100px">Gitee</td><td></td></tr><tr style="height:39px"><td style="width:100px">Github</td><td></td></tr></table><div class="gb" style="left:131.3px;top:307.0px;width:85.5px"><div class="r"><svg width="22" height="20" viewBox="0 0 22 20"><path d="M16.6,4.4 L8.8,4.4 Q4.6,4.4 4.6,8.6 L4.6,11.4 Q4.6,15.6 8.8,15.6 L12.6,15.6 Q16.8,15.6 16.8,11.4 L16.8,9.6 L10.4,9.6 L10.4,12 L13.8,12 Q13.8,13 12.8,13 L8.8,13 Q7.4,13 7.4,11.6 L7.4,8.4 Q7.4,7 8.8,7 L16.6,7 Z" fill="#fff"/></svg></div><div class="d">941 Stars</div></div><div class="gb" style="left:233.0px;top:307.0px;width:86px"><div class="r"><svg width="22" height="20" viewBox="0 0 22 20"><path d="M16.6,4.4 L8.8,4.4 Q4.6,4.4 4.6,8.6 L4.6,11.4 Q4.6,15.6 8.8,15.6 L12.6,15.6 Q16.8,15.6 16.8,11.4 L16.8,9.6 L10.4,9.6 L10.4,12 L13.8,12 Q13.8,13 12.8,13 L8.8,13 Q7.4,13 7.4,11.6 L7.4,8.4 Q7.4,7 8.8,7 L16.6,7 Z" fill="#fff"/></svg></div><div class="d">278 Forks</div></div><div class="gh" style="left:131.3px;top:342.2px;width:51.2px"><svg width="14" height="14" viewBox="0 0 16 16" style="position:absolute;left:3.5px;top:2.2px"><path fill="#333" d="M8 0C3.58 0 0 3.58 0 8c0 3.54 2.29 6.53 5.47 7.59.4.07.55-.17.55-.38 0-.19-.01-.82-.01-1.49-2.01.37-2.53-.49-2.69-.94-.09-.23-.48-.94-.82-1.13-.28-.15-.68-.52-.01-.53.63-.01 1.08.58 1.23.82.72 1.21 1.87.87 2.33.66.07-.52.28-.87.51-1.07-1.78-.2-3.64-.89-3.640-3.950 0-.87.31-1.59.82-2.15-.08-.2-.36-1.02.08-2.12 0 0 .67-.21 2.2.82.64-.18 1.320-.27 2-.27.68 0 1.36.09 2 .27 1.53-1.04 2.2-.82 2.2-.82.44 1.1.16 1.92.08 2.12.51.56.82 1.27.82 2.15 0 3.07-1.87 3.75-3.65 3.95.29.25.54.73.54 1.48 0 1.070-.01 1.93-.01 2.2 0 .21.15.46.55.38A8.013 8.013 0 0016 8c0-4.42-3.58-8-8-8z"/></svg><span style="position:absolute;left:24px">Star</span></div><div class="gc" style="left:187.3px;top:342.2px;width:40.2px">1,419</div><div class="gh" style="left:231.4px;top:342.2px;width:54.3px"><svg width="14" height="14" viewBox="0 0 16 16" style="position:absolute;left:3.5px;top:2.2px"><path fill="#333" d="M8 0C3.58 0 0 3.58 0 8c0 3.54 2.29 6.53 5.47 7.59.4.07.55-.17.55-.38 0-.19-.01-.82-.01-1.49-2.01.37-2.53-.49-2.69-.94-.09-.23-.48-.94-.82-1.13-.28-.15-.68-.52-.01-.53.63-.01 1.08.58 1.23.82.72 1.21 1.87.87 2.33.66.07-.52.28-.87.51-1.07-1.78-.2-3.64-.89-3.640-3.950 0-.87.31-1.59.82-2.15-.08-.2-.36-1.02.08-2.12 0 0 .67-.21 2.2.82.64-.18 1.320-.27 2-.27.68 0 1.36.09 2 .27 1.53-1.04 2.2-.82 2.2-.82.44 1.1.16 1.92.08 2.12.51.56.82 1.27.82 2.15 0 3.07-1.87 3.75-3.65 3.95.29.25.54.73.54 1.48 0 1.070-.01 1.93-.01 2.2 0 .21.15.46.55.38A8.013 8.013 0 0016 8c0-4.42-3.58-8-8-8z"/></svg><span style="position:absolute;left:23px">Fork</span></div><div class="gc" style="left:290.4px;top:342.2px;width:30.1px">440</div>
</div>
<div class="card" id="c6" style="left:1347px;top:820px;width:551px;height:300px">
  <div class="ch"><svg width="16" height="16" viewBox="1363 834 16 16" style="top:13px;left:15px"><path d="M1364.2,841.8 L1376.6,834.8 L1374.6,846.2 Z" fill="none" stroke="#1aa094" stroke-width="1.3" stroke-linejoin="round"/><path d="M1368.4,843.2 L1373.8,838.6 L1370.8,843.8 L1367.4,847.7 Z" fill="#1aa094"/></svg>作者心语</div><div class="abs" style="left:15px;top:51.2px;font-size:14px;line-height:24px;color:#666;white-space:nowrap">本模板基于layui2.5.4以及font-awesome-4.7.0进行实现。layui开发文档地址：</div>
<div class="abs" style="left:15px;top:75px;width:59px;height:21.5px;background:#ff5722;color:#fff;line-height:21.5px;text-align:center;font-size:12px;font-weight:bold;border-radius:2px">layui文档</div>
<div class="abs" style="left:15px;top:96.5px;font-size:14px;line-height:24px;color:#666;white-space:nowrap">技术交流QQ群（667813249）：</div>
<div class="abs" style="left:219px;top:99px;width:90px;height:22px;border:1px solid #4a90d0;border-radius:2px;background:linear-gradient(#3fa6ee,#1686d8)"><span style="position:absolute;left:0;top:0;width:22px;height:20px;background:linear-gradient(#f5f9fd,#dfe9f5)"><svg width="22" height="20" viewBox="0 0 22 20"><circle cx="8" cy="7" r="3.6" fill="#e9c29a"/><path d="M4,6 Q8,1 12,6 L12,4.5 Q8,0.5 4,4.5 Z" fill="#8b4a1e"/><path d="M2.5,19 Q3,12 8,12 Q13,12 13.5,19 Z" fill="#4d8fd1"/><circle cx="14.5" cy="8" r="3.4" fill="#e9c29a"/><path d="M11,8 Q11,3 14.5,3 Q18,3 18,8 L18.5,11 L16.8,8 Q14.5,5 12.2,8 L10.5,11 Z" fill="#9b4a18"/><path d="M9.5,19 Q10,13 14.5,13 Q19,13 19.5,19 Z" fill="#6bb36b"/></svg></span><span style="position:absolute;left:26px;top:0;line-height:20px;color:#fff;font-size:13px;white-space:nowrap">加入QQ群</span></div>
<div class="abs" style="left:311px;top:96.5px;font-size:14px;line-height:24px;color:#666;white-space:nowrap">（加群请备注来源：如gitee、</div>
<div class="abs" style="left:15px;top:120.0px;font-size:14px;line-height:24px;color:#666;white-space:nowrap">github、官网等)</div>
<div class="abs" style="left:15px;top:144.0px;font-size:14px;line-height:24px;color:#666;white-space:nowrap">喜欢此后台模板的可以给我的GitHub和Gitee加个Star支持一下</div>
</div>
</body></html>
